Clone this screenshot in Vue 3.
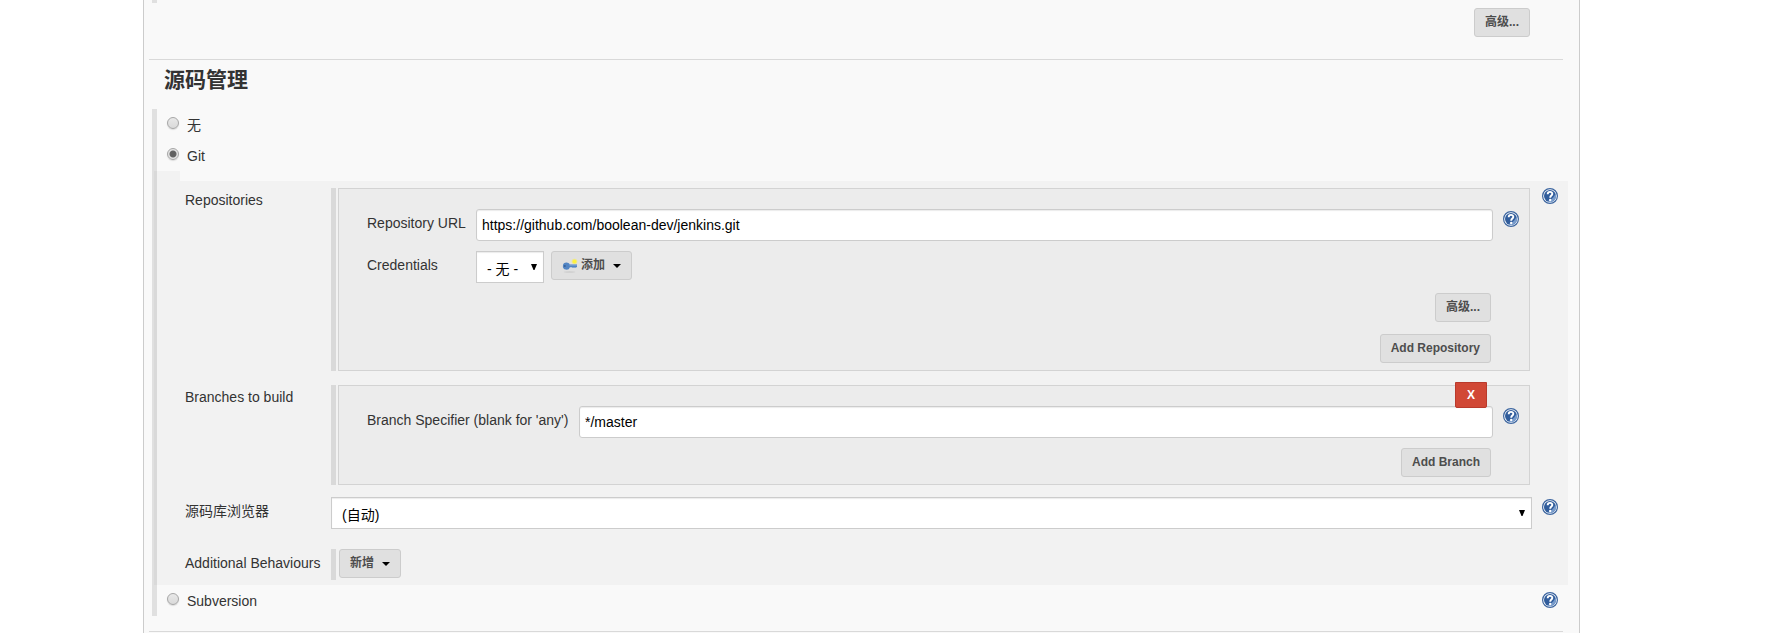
<template>
  <div class="config-panel">
    <div class="block-end"></div>
    <div class="top-actions">
      <button type="button" class="btn">高级...</button>
    </div>

    <h2 class="section-title">源码管理</h2>

    <!-- SCM 选项 -->
    <div class="scm-list">
      <div class="radio-row">
        <input id="scm-none" v-model="scm" type="radio" name="scm" value="none" />
        <label for="scm-none">无</label>
      </div>
      <div class="radio-row">
        <input id="scm-git" v-model="scm" type="radio" name="scm" value="git" />
        <label for="scm-git">Git</label>
      </div>

      <template v-if="scm === 'git'">
        <div class="git-tab"></div>
        <div class="git-body">
          <!-- 仓库 -->
          <div class="setting-row">
            <div class="setting-name">Repositories</div>
            <div class="repeated">
              <div class="chunk">
                <div class="field">
                  <label for="repo-url" class="field-name">Repository URL</label>
                  <input id="repo-url" v-model="repoUrl" type="text" class="text-input" />
                  <HelpIcon />
                </div>
                <div class="field">
                  <label for="credentials" class="field-name">Credentials</label>
                  <div class="select-wrap small">
                    <select id="credentials" v-model="credentials">
                      <option value="">- 无 -</option>
                    </select>
                    <svg class="arrow" viewBox="0 0 6 6"><path d="M0 0h6L3.5 6h-1z" /></svg>
                  </div>
                  <button type="button" class="btn">
                    <svg class="key" viewBox="0 0 16 16">
                      <ellipse cx="7.5" cy="14" rx="6" ry=".8" fill="#cdcdcd" />
                      <circle cx="12.500" cy="3.500" r="2.800" fill="#efe98a" />
                      <circle cx="12.500" cy="3.500" r="1.800" fill="#fff23a" />
                      <path
                        d="M4.500 4.500c1.500 0 2.600.7 3.200 1.900h7.300v2.800h-1.500v.8h-1v-.8h-1v.8h-1v-.8H7.900A3.600 3.600 0 1 1 4.500 4.500z"
                        fill="#5285c4"
                      />
                      <path d="M7.500 7.200H15" stroke="#86abd8" stroke-width=".8" />
                      <circle cx="2.800" cy="8" r="1" fill="#3a6194" />
                    </svg>
                    添加
                    <svg class="caret" viewBox="0 0 8 4"><path d="M0 0h8L4 4z" /></svg>
                  </button>
                </div>
                <div class="chunk-actions">
                  <button type="button" class="btn">高级...</button>
                </div>
                <div class="chunk-actions add-repo">
                  <button type="button" class="btn">Add Repository</button>
                </div>
              </div>
            </div>
            <HelpIcon />
          </div>

          <!-- 分支 -->
          <div class="setting-row branches">
            <div class="setting-name">Branches to build</div>
            <div class="repeated">
              <div class="chunk">
                <button type="button" class="delete-btn">X</button>
                <div class="field">
                  <label for="branch" class="field-name wide">Branch Specifier (blank for 'any')</label>
                  <input id="branch" v-model="branch" type="text" class="text-input" />
                  <HelpIcon />
                </div>
                <div class="chunk-actions">
                  <button type="button" class="btn">Add Branch</button>
                </div>
              </div>
            </div>
          </div>

          <div class="setting-row browser">
            <label for="browser" class="setting-name">源码库浏览器</label>
            <div class="select-wrap">
              <select id="browser" v-model="browser">
                <option value="auto">(自动)</option>
              </select>
              <svg class="arrow" viewBox="0 0 6 6"><path d="M0 0h6L3.5 6h-1z" /></svg>
            </div>
            <HelpIcon />
          </div>

          <div class="setting-row behaviours">
            <div class="setting-name">Additional Behaviours</div>
            <div class="repeated">
              <button type="button" class="btn">
                新增
                <svg class="caret" viewBox="0 0 8 4"><path d="M0 0h8L4 4z" /></svg>
              </button>
            </div>
          </div>
        </div>
      </template>

      <div class="radio-row">
        <input id="scm-svn" v-model="scm" type="radio" name="scm" value="svn" />
        <label for="scm-svn">Subversion</label>
        <HelpIcon />
      </div>
    </div>

    <div class="section-end"></div>
  </div>
</template>

<script setup>
import { ref, h } from 'vue'

const scm = ref('git')
const repoUrl = ref('https://github.com/boolean-dev/jenkins.git')
const credentials = ref('')
const branch = ref('*/master')
const browser = ref('auto')

// 帮助图标
const HelpIcon = () =>
  h('svg', { class: 'help-icon', viewBox: '0 0 16 16', width: 16, height: 16 }, [
    h('circle', { cx: 8, cy: 8, r: 7.4, fill: '#fff', stroke: '#3c659f', 'stroke-width': 1.2 }),
    h('circle', { cx: 8, cy: 8, r: 6, fill: '#315d9c' }),
    h('path', { d: 'M13.500 5.500A6 6 0 0 1 5 13.200C9 12.500 12 9.500 13.500 5.500z', fill: '#779bcb' }),
    h('path', {
      d: 'M5.700 6.200C5.700 3.200 10.500 3.200 10.300 5.900C10.200 7.600 8.200 7.500 8.200 9.700',
      fill: 'none',
      stroke: '#fff',
      'stroke-width': 1.9,
    }),
    h('circle', { cx: 8.2, cy: 12, r: 1.2, fill: '#fff' }),
  ])
</script>

<style>
body {
  margin: 0;
  background-color: #fff;
}
</style>

<style scoped>
.config-panel {
  box-sizing: border-box;
  min-height: 100vh;
  margin: 0 191px 0 143px;
  padding: 0 11px 0 5px;
  border: solid #ccc;
  border-width: 0 1px;
  background-color: #f9f9f9;
  color: #333;
  font-family: 'Liberation Sans', 'Noto Sans CJK SC', sans-serif;
  font-size: 14px;
  line-height: 20px;
}

.block-end {
  width: 5px;
  height: 3px;
  margin-left: 3px;
  background-color: #e0e0e0;
}

.top-actions {
  display: flex;
  justify-content: flex-end;
  padding: 5px 38px 22px 0;
}

.section-title {
  margin: 0 5px 9px 0;
  padding-left: 15px;
  border-top: 1px solid #d9d9d9;
  font-size: 21px;
  font-weight: bold;
  line-height: 40px;
}

.section-end {
  margin: 15px 5px 0 0;
  border-top: 1px solid #d9d9d9;
}

.scm-list {
  margin-left: 3px;
  border-left: 5px solid #e0e0e0;
}

.radio-row {
  display: flex;
  align-items: center;
  height: 31px;
  padding: 0 10px;
}

.radio-row input {
  appearance: none;
  box-sizing: border-box;
  width: 12px;
  height: 12px;
  margin: 0 8px 3px 0;
  border: 1px solid #a6a6a6;
  border-radius: 50%;
  background: linear-gradient(#e8e8e8, #dadada);
  box-shadow: 0 1px 1px #ddd;
}

.radio-row input:checked {
  background: radial-gradient(circle, #606060 0 2px, #666 3px, #e4e4e4 4px);
}

.radio-row .help-icon {
  margin: 0 0 2px auto;
}

.git-tab {
  width: 23px;
  height: 10px;
  margin-left: -3px;
  border-left: 3px solid #d9d9d9;
  background-color: #f2f2f2;
}

.git-body {
  margin-left: -3px;
  padding: 7px 10px 5px 28px;
  border-left: 3px solid #d9d9d9;
  background-color: #f2f2f2;
}

.setting-row {
  display: flex;
  align-items: flex-start;
}

.setting-row.branches {
  margin-top: 14px;
  padding-right: 28px;
}

.setting-row.browser {
  margin-top: 12px;
}

.setting-row.behaviours {
  margin-top: 20px;
}

.setting-name {
  flex: none;
  width: 146px;
  line-height: 24px;
}

.browser .setting-name,
.behaviours .setting-name {
  line-height: 28px;
}

.repeated {
  flex: 1;
  padding-left: 2px;
  border-left: 5px solid #d9d9d9;
}

.behaviours .repeated {
  height: 31px;
  padding-left: 3px;
}

.repeated + .help-icon {
  margin-left: 12px;
}

.chunk {
  position: relative;
  padding: 20px 10px 7px 28px;
  border: 1px solid #d3d3d3;
  background-color: #ececec;
}

.field {
  display: flex;
  align-items: flex-start;
  margin-bottom: 10px;
}

.field-name {
  flex: none;
  width: 109px;
  line-height: 28px;
}

.field-name.wide {
  width: 212px;
}

.text-input {
  flex: 1;
  box-sizing: border-box;
  min-width: 0;
  height: 32px;
  padding: 0 5px;
  border: 1px solid #ccc;
  border-radius: 3px;
  background-color: #fff;
  box-shadow: inset 0 1px 1px rgba(0, 0, 0, 0.08);
  color: #000;
  font: inherit;
}

.text-input + .help-icon,
.select-wrap + .help-icon {
  margin: 2px 0 0 10px;
}

.select-wrap {
  position: relative;
  flex: 1;
}

.select-wrap.small {
  flex: none;
  width: 68px;
  margin-right: 7px;
}

.select-wrap select {
  appearance: none;
  display: block;
  box-sizing: border-box;
  width: 100%;
  height: 32px;
  padding: 4px 20px 0 10px;
  border: 1px solid #ccc;
  border-radius: 0;
  background-color: #fff;
  box-shadow: inset 0 1px 1px rgba(0, 0, 0, 0.08);
  color: #000;
  font: inherit;
}

.arrow {
  position: absolute;
  top: 13px;
  right: 7px;
  width: 6px;
  height: 6px;
  pointer-events: none;
}

.btn {
  display: inline-flex;
  align-items: center;
  box-sizing: border-box;
  height: 29px;
  padding: 0 10px 2px;
  border: 1px solid #ccc;
  border-radius: 3px;
  background-color: #e0e0e0;
  color: #4d4d4d;
  font-family: inherit;
  font-size: 12px;
  font-weight: bold;
  line-height: 20px;
  white-space: nowrap;
  cursor: pointer;
}

.key {
  width: 16px;
  height: 16px;
  margin: 2px 3px 0 0;
}

.caret {
  width: 8px;
  height: 4px;
  margin: 3px 0 0 8px;
  fill: #000;
}

.chunk-actions {
  display: flex;
  justify-content: flex-end;
  margin-right: 28px;
}

.add-repo {
  margin-top: 12px;
}

.delete-btn {
  position: absolute;
  top: -4px;
  right: 42px;
  width: 32px;
  height: 26px;
  padding: 0;
  border: 1px solid #b93a2c;
  border-radius: 0 0 2px 2px;
  background-color: #d14836;
  color: #fff;
  font-family: inherit;
  font-size: 12px;
  font-weight: bold;
  cursor: pointer;
}

.help-icon {
  flex: none;
}
</style>
